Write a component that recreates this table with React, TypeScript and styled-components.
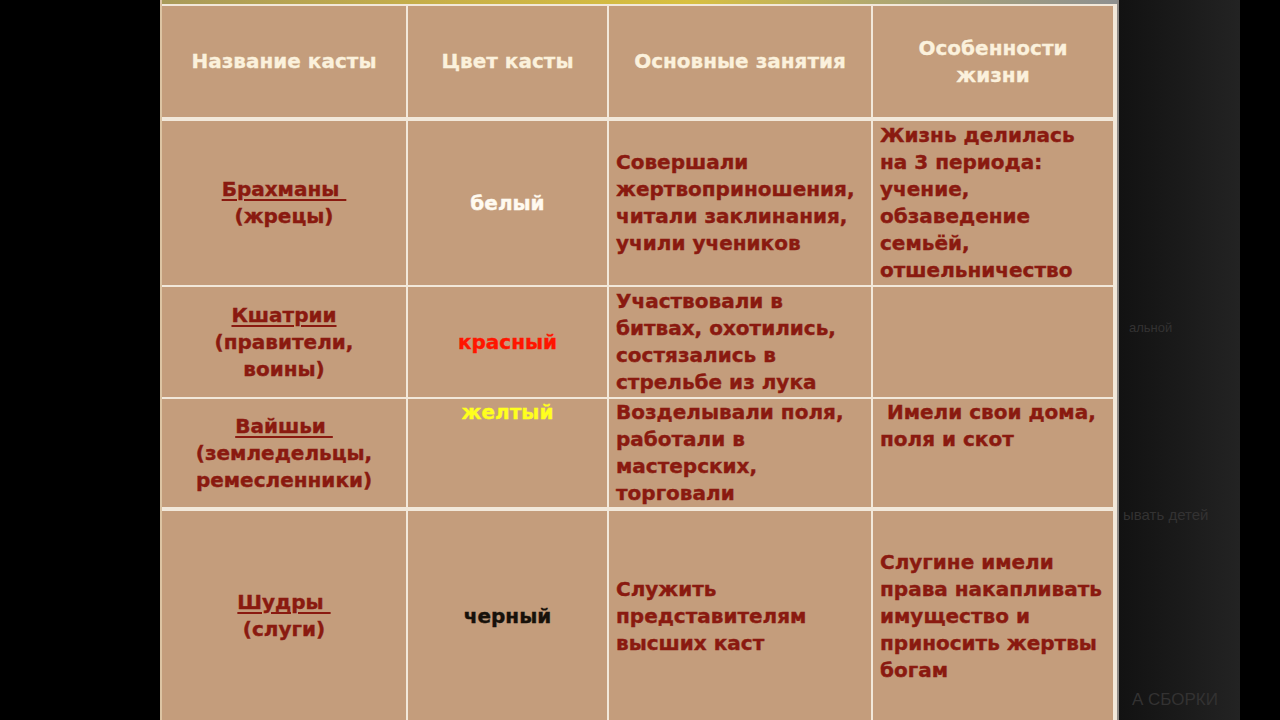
import React from "react";
import styled, { createGlobalStyle } from "styled-components";

const GlobalStyle = createGlobalStyle`
  html, body {
    margin: 0;
    padding: 0;
    width: 1280px;
    height: 720px;
    overflow: hidden;
    background: #000;
  }
  #root { width: 1280px; height: 720px; }
`;

const Page = styled.div`
  display: flex;
  width: 1280px;
  height: 720px;
  overflow: hidden;
  background: #000;
  font-family: "DejaVu Sans", "Liberation Sans", sans-serif;
`;

const Gutter = styled.div`
  width: 160px;
  flex: 0 0 160px;
  background: #000;
`;

const Board = styled.div`
  flex: 0 0 959px;
  width: 959px;
  display: flex;
  flex-direction: column;
  box-sizing: border-box;
  border-left: 2px solid #dcc4a3;
  border-right: 2px solid #8e8a86;
`;

const TopStrip = styled.div`
  height: 4px;
  flex: 0 0 4px;
  background: linear-gradient(90deg, #a89a5a 0%, #c8b048 30%, #d8c040 55%, #b0a870 75%, #8e9090 100%);
`;

const Table = styled.div`
  display: flex;
  flex-direction: column;
  background: #f2e8da;
  padding: 2px 4px 0 0;
`;

const Row = styled.div<{ $h: number; $gap: number }>`
  display: grid;
  grid-template-columns: 244px 199px 262px 240px;
  column-gap: 2px;
  height: ${(p) => p.$h}px;
  flex: 0 0 ${(p) => p.$h}px;
  margin-top: ${(p) => p.$gap}px;
`;

const HeadCell = styled.div`
  background: #c49d7c;
  display: flex;
  flex-direction: column;
  align-items: center;
  justify-content: center;
  color: #fbf1dc;
  font-weight: bold;
  font-size: 20px;
  line-height: 27px;
  text-align: center;
  white-space: nowrap;
  -webkit-text-stroke: 0.3px #fbf1dc;
`;

const Cell = styled.div<{ $center?: boolean; $top?: boolean }>`
  background: #c49d7c;
  display: flex;
  flex-direction: column;
  align-items: ${(p) => (p.$center ? "center" : "flex-start")};
  justify-content: ${(p) => (p.$top ? "flex-start" : "center")};
  padding: 0 0 0 ${(p) => (p.$center ? 0 : 7)}px;
  box-sizing: border-box;
  color: #8a1a10;
  font-weight: bold;
  font-size: 20px;
  line-height: 27px;
  text-align: ${(p) => (p.$center ? "center" : "left")};
  white-space: nowrap;
  overflow: hidden;
  -webkit-text-stroke: 0.4px currentColor;
`;

const Line = styled.div``;

const CasteName = styled.span`
  text-decoration: underline;
  text-decoration-thickness: 1.5px;
  text-underline-offset: 3px;
`;

const Swatch = styled.span<{ $color: string }>`
  color: ${(p) => p.$color};
`;

const Side = styled.div`
  flex: 0 0 121px;
  width: 121px;
  height: 720px;
  background: linear-gradient(90deg, #121212 0%, #1a1a1a 50%, #232323 100%);
  overflow: hidden;
  display: flex;
  flex-direction: column;
  color: #333232;
  font-family: "Liberation Sans", Arial, sans-serif;
`;

const Ghost = styled.div<{ $top: number; $left: number; $size: number }>`
  margin-top: ${(p) => p.$top}px;
  margin-left: ${(p) => p.$left}px;
  font-size: ${(p) => p.$size}px;
  line-height: 16px;
  white-space: nowrap;
`;

const RightEdge = styled.div`
  flex: 1 1 auto;
  background: #000;
`;

type CasteRow = {
  name: string;
  note: string[];
  color: { label: string; value: string; top?: boolean };
  jobs: string[];
  life: string[];
  lifeTop?: boolean;
  h: number;
  gap: number;
};

const rows: CasteRow[] = [
  {
    name: "Брахманы\u00a0",
    note: ["(жрецы)"],
    color: { label: "белый", value: "#fffaf0" },
    jobs: ["Совершали", "жертвоприношения,", "читали заклинания,", "учили учеников"],
    life: ["Жизнь делилась", "на 3 периода:", "учение,", "обзаведение", "семьёй,", "отшельничество"],
    h: 164,
    gap: 4,
  },
  {
    name: "Кшатрии",
    note: ["(правители,", "воины)"],
    color: { label: "красный", value: "#ff1500" },
    jobs: ["Участвовали в", "битвах, охотились,", "состязались в", "стрельбе из лука"],
    life: [],
    h: 110,
    gap: 2,
  },
  {
    name: "Вайшьи\u00a0",
    note: ["(земледельцы,", "ремесленники)"],
    color: { label: "желтый", value: "#ffff1e", top: true },
    jobs: ["Возделывали поля,", "работали в", "мастерских,", "торговали"],
    life: ["\u00a0Имели свои дома,", "поля и скот"],
    lifeTop: true,
    h: 108,
    gap: 2,
  },
  {
    name: "Шудры\u00a0",
    note: ["(слуги)"],
    color: { label: "черный", value: "#17110a" },
    jobs: ["Служить", "представителям", "высших каст"],
    life: ["Слугине имели", "права накапливать", "имущество и", "приносить жертвы", "богам"],
    h: 210,
    gap: 4,
  },
];

export default function App() {
  return (
    <>
      <GlobalStyle />
      <Page>
        <Gutter />
        <Board>
          <TopStrip />
          <Table>
            <Row $h={111} $gap={0}>
              <HeadCell>Название касты</HeadCell>
              <HeadCell>Цвет касты</HeadCell>
              <HeadCell>Основные занятия</HeadCell>
              <HeadCell>
                <Line>Особенности</Line>
                <Line>жизни</Line>
              </HeadCell>
            </Row>
            {rows.map((r) => (
              <Row key={r.name} $h={r.h} $gap={r.gap}>
                <Cell $center>
                  <Line>
                    <CasteName>{r.name}</CasteName>
                  </Line>
                  {r.note.map((n) => (
                    <Line key={n}>{n}</Line>
                  ))}
                </Cell>
                <Cell $center $top={r.color.top}>
                  <Line>
                    <Swatch $color={r.color.value}>{r.color.label}</Swatch>
                  </Line>
                </Cell>
                <Cell>
                  {r.jobs.map((j) => (
                    <Line key={j}>{j}</Line>
                  ))}
                </Cell>
                <Cell $top={r.lifeTop}>
                  {r.life.map((l) => (
                    <Line key={l}>{l}</Line>
                  ))}
                </Cell>
              </Row>
            ))}
          </Table>
        </Board>
        <Side>
          <Ghost $top={320} $left={10} $size={13}>альной</Ghost>
          <Ghost $top={171} $left={4} $size={15}>ывать детей</Ghost>
          <Ghost $top={169} $left={13} $size={17}>А СБОРКИ</Ghost>
        </Side>
        <RightEdge />
      </Page>
    </>
  );
}
